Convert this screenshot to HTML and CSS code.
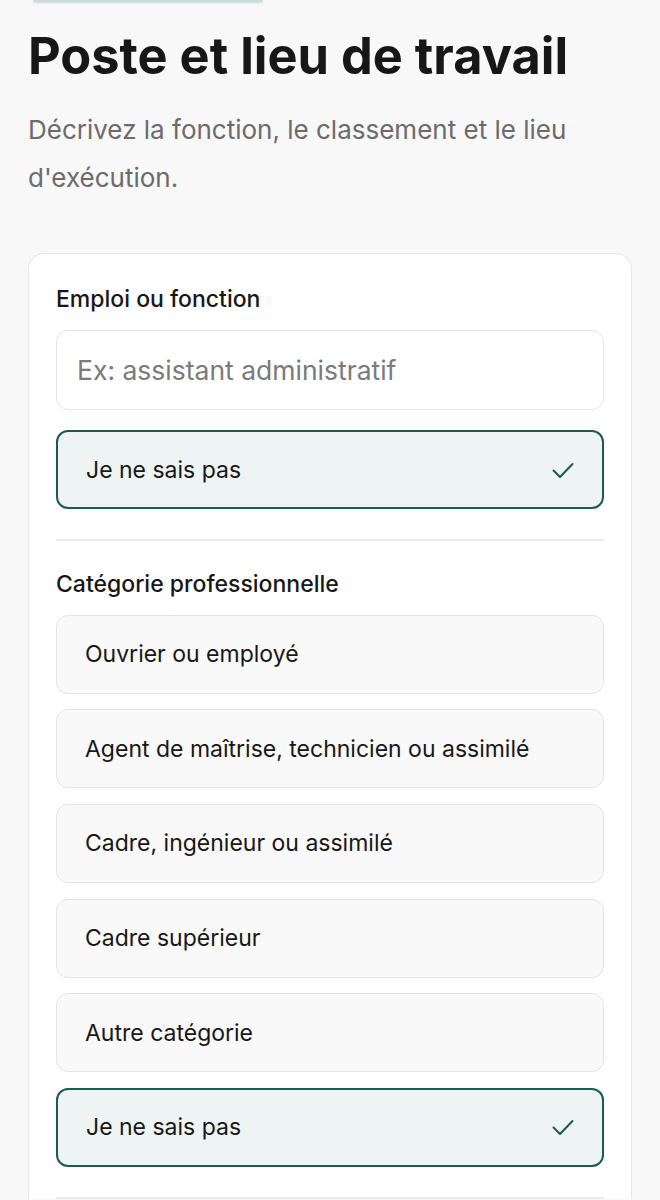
FILE: index.html
```html
<!DOCTYPE html>
<html lang="fr">
<head>
  <meta charset="UTF-8">
  <title>Poste et lieu de travail</title>
  <meta name="viewport" content="width=device-width, initial-scale=1.0">
  <link rel="stylesheet" href="styles.css">
</head>
<body>

  <div class="page">
    <div class="step-tab"></div>

    <h1 class="title">Poste et lieu de travail</h1>
    <p class="subtitle">Décrivez la fonction, le classement et le lieu d'exécution.</p>

    <div class="card">
      <div class="field">
        <div class="label">Emploi ou fonction</div>
        <input class="text-input" type="text" placeholder="Ex: assistant administratif">
        <div class="option selected">
          <span>Je ne sais pas</span>
          <svg class="check" width="24" height="24" viewBox="0 0 24 24"><path d="M2.5 12.5L9 19L21.5 6"/></svg>
        </div>
      </div>

      <div class="divider"></div>

      <div class="field">
        <div class="label">Catégorie professionnelle</div>
        <div class="option">Ouvrier ou employé</div>
        <div class="option">Agent de maîtrise, technicien ou assimilé</div>
        <div class="option">Cadre, ingénieur ou assimilé</div>
        <div class="option">Cadre supérieur</div>
        <div class="option">Autre catégorie</div>
        <div class="option selected">
          <span>Je ne sais pas</span>
          <svg class="check" width="24" height="24" viewBox="0 0 24 24"><path d="M2.5 12.5L9 19L21.5 6"/></svg>
        </div>
      </div>

      <div class="divider"></div>
    </div>
  </div>

</body>
</html>
```

FILE: styles.css
```css
html, body {
  margin: 0;
  padding: 0;
  background: #f8f8f8;
  font-family: Inter, "Noto Sans", sans-serif;
  color: #171717;
}

.page {
  padding: 0 28px;
}

/* bottom edge of the step tab above the heading */
.step-tab {
  width: 230px;
  height: 2px;
  margin-left: 5px;
  background: #c8dcdc;
  border-radius: 0 0 6px 6px;
  box-shadow: 0 1px 2px rgba(0, 0, 0, 0.15);
}

.title {
  margin: 26px 0 0;
  font-size: 50.5px;
  font-weight: 700;
  line-height: 56px;
}

.subtitle {
  margin: 22px 0 0;
  font-size: 26px;
  line-height: 48px;
  color: #6b6b6b;
}

.card {
  margin-top: 51px;
  background: #fff;
  border: 1.5px solid #e6e6e6;
  border-bottom: none;
  border-radius: 16px 16px 0 0;
  padding: 30px 27px 0;
}

.field {
  display: flex;
  flex-direction: column;
  gap: 15.6px;
}

.label {
  font-size: 23px;
  font-weight: 500;
  line-height: 30px;
}

.text-input {
  height: 80px;
  box-sizing: border-box;
  padding: 0 20px;
  margin-bottom: 5px;
  border: 1.5px solid #e4e4e4;
  border-radius: 12px;
  background: #fff;
  font-family: inherit;
  font-size: 26.5px;
  color: #171717;
  outline: none;
}

.text-input::placeholder {
  color: #7a7a7a;
}

.option {
  height: 79px;
  box-sizing: border-box;
  display: flex;
  align-items: center;
  justify-content: space-between;
  padding: 0 28px;
  border: 1.5px solid #e4e4e4;
  border-radius: 12px;
  background: #f9f9f9;
  font-size: 23px;
}

.option.selected {
  border: 2px solid #1d5c4d;
  background: #eef3f3;
}

.check {
  fill: none;
  stroke: #1d5c4d;
  stroke-width: 2;
  stroke-linecap: round;
  stroke-linejoin: round;
  margin-right: -1px;
}

.divider {
  height: 2px;
  background: #ececec;
  margin: 30px 0 28px;
}
```
